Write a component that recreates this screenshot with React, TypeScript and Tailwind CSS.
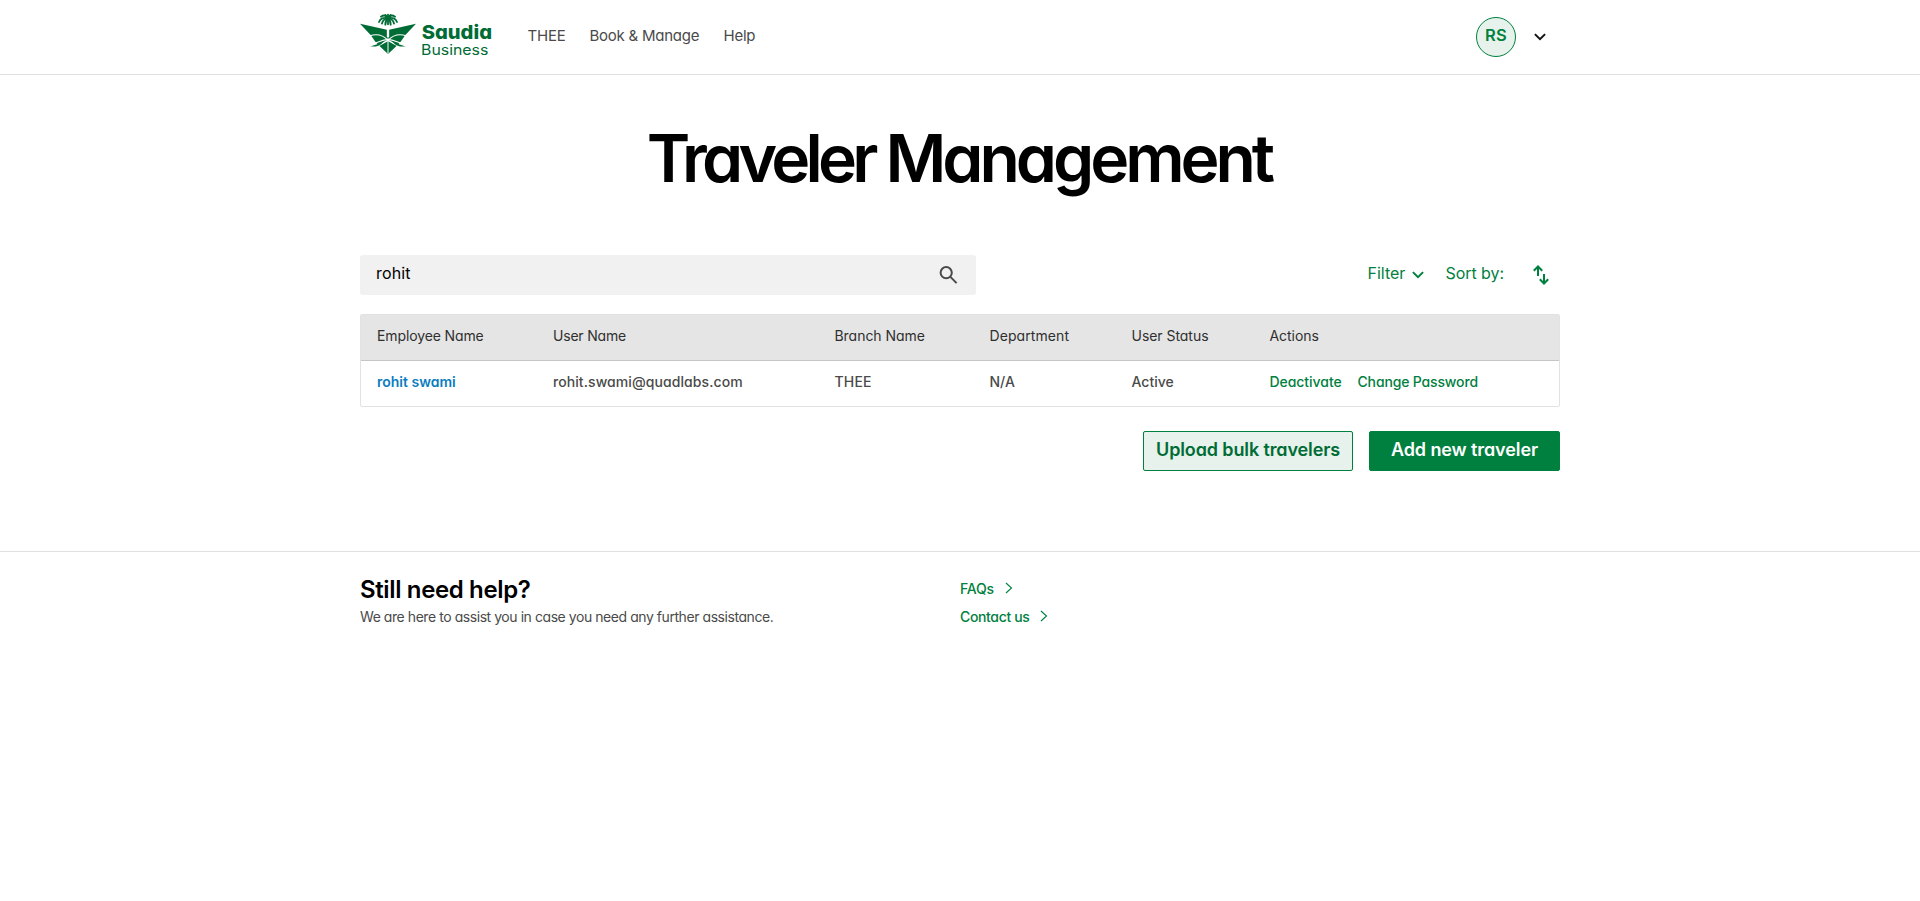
type Column = { label: string; width: string; tracking: string };

const columns: Column[] = [
  { label: "Employee Name", width: "w-[176px]", tracking: "tracking-[-0.12px]" },
  { label: "User Name", width: "w-[281.5px]", tracking: "tracking-[-0.2px]" },
  { label: "Branch Name", width: "w-[155px]", tracking: "tracking-[-0.04px]" },
  { label: "Department", width: "w-[142px]", tracking: "tracking-[0.08px]" },
  { label: "User Status", width: "w-[138px]", tracking: "tracking-[-0.04px]" },
  { label: "Actions", width: "flex-1", tracking: "tracking-[-0.05px]" },
];

function Logo() {
  return (
    <svg width="136" height="46" viewBox="0 0 408 138" fill="#006c35" className="shrink-0">
      <path d="M0 32 L84 51 L168 32 L136 66 L122 86 L112 97 L84 123 L56 97 L46 86 L32 66Z" />
      <g fill="none" stroke="#fff">
        <path d="M84 44 V122" strokeWidth="3" />
        <path d="M84 44 V72" strokeWidth="7" />
        <path d="M28 69 C48 62 68 65 84 82 C100 65 120 62 140 69" strokeWidth="3.5" />
        <path d="M40 92 C58 88 70 78 84 80 C98 78 110 88 128 92" strokeWidth="3.5" />
        <path d="M50 101 L84 82 L118 101" strokeWidth="4" />
      </g>
      <path d="M30 99 C44 99 54 92 72 84 C62 96 54 104 30 99Z" />
      <path d="M138 99 C124 99 114 92 96 84 C106 96 114 104 138 99Z" />
      <g fill="none" stroke="#006c35" strokeWidth="5.5" strokeLinecap="round">
        <path d="M84 16 C72 12 61 17 57 27" />
        <path d="M84 16 C75 16 67 23 66 32" />
        <path d="M84 16 C79 20 76 27 76 35" />
        <path d="M84 16 C96 12 107 17 111 27" />
        <path d="M84 16 C93 16 101 23 102 32" />
        <path d="M84 16 C89 20 92 27 92 35" />
        <path d="M84 14 C78 7 70 6 63 11" />
        <path d="M84 14 C90 7 98 6 105 11" />
        <path d="M84 5 V34" />
        <path d="M84 14 L76 6 M84 14 L92 6" />
      </g>
      <text x="185" y="78" fontSize="58" fontWeight="800" textLength="211" lengthAdjust="spacingAndGlyphs">
        Saudia
      </text>
      <text x="183" y="125" fontSize="44" fontWeight="400" textLength="202" lengthAdjust="spacingAndGlyphs">
        Business
      </text>
    </svg>
  );
}

function ChevronDown({ className }: { className: string }) {
  return (
    <svg viewBox="0 0 12 8" width="12" height="8" fill="none" stroke="currentColor" strokeWidth="2" className={className}>
      <path d="M0.9 1.1 L6 6.2 L11.1 1.1" />
    </svg>
  );
}

function ChevronRight() {
  return (
    <svg viewBox="0 0 8 12" width="8" height="12" fill="none" stroke="currentColor" strokeWidth="1.1">
      <path d="M1 1 L6.5 6 L1 11" />
    </svg>
  );
}

function Header() {
  return (
    <header className="h-[75px] border-b border-[#e0e0e0]">
      <div className="mx-auto flex h-full w-[1200px] items-start">
        <div className="pt-[13px]">
          <Logo />
        </div>
        <nav className="ml-[31.5px] flex h-[72px] items-center text-[15px] text-[#4a4a4a]">
          <a className="w-[62px] tracking-[-0.2px]">THEE</a>
          <a className="w-[134px] tracking-[-0.24px]">Book &amp; Manage</a>
          <a className="tracking-[-0.25px]">Help</a>
        </nav>
        <div className="ml-auto mr-[14px] flex pt-[17px]">
          <div className="flex h-10 w-10 items-center justify-center rounded-full border border-[#00803e] bg-[#e6f2eb] pb-[4px] text-[16.5px] font-semibold tracking-[0.2px] text-[#00803e]">
            RS
          </div>
          <ChevronDown className="ml-[18px] mt-4 text-[#111]" />
        </div>
      </div>
    </header>
  );
}

function Toolbar() {
  return (
    <div className="flex h-10 justify-between">
      <div className="flex w-[616px] items-start justify-between rounded-[3px] bg-[#f1f1f1] pl-4 pr-[18.5px] text-[16px] leading-[36px] text-black">
        <span className="tracking-[0.15px]">rohit</span>
        <svg width="19" height="19" viewBox="0 0 19 19" fill="none" stroke="#4a4a4a" strokeWidth="2" className="mt-[10px]">
          <circle cx="7.2" cy="7.7" r="5.6" />
          <path d="M11.4 11.9 L17.6 18.1" />
        </svg>
      </div>
      <div className="flex items-start text-[16px] leading-[36px] text-[#00803e]">
        <span className="w-[44.5px]">Filter</span>
        <ChevronDown className="mt-4" />
        <span className="ml-[21.5px] w-[87.5px] tracking-[-0.05px]">Sort by:</span>
        <svg width="16" height="20" viewBox="0 0 16 20" fill="none" stroke="currentColor" strokeWidth="2" className="mr-[11px] mt-[10px]">
          <path d="M5 11 V2 M0.8 5.7 L5 1.5 L9.2 5.7" />
          <path d="M11 9 V18 M6.8 14.3 L11 18.5 L15.2 14.3" />
        </svg>
      </div>
    </div>
  );
}

function TravelerTable() {
  return (
    <div className="mt-[19px] rounded-[2px] border border-[#e2e2e2] text-[14px]">
      <div className="flex h-[46px] border-b border-[#c6c6c6] bg-[#e5e5e5] pl-4 leading-[41px] text-[#2f2f2f]">
        {columns.map((c) => (
          <div key={c.label} className={`${c.width} ${c.tracking}`}>
            {c.label}
          </div>
        ))}
      </div>
      <div className="flex h-[45px] pl-4 font-medium leading-[41px] text-[#4a4a4a]">
        <div className="w-[176px] font-semibold text-[#0a7dc0]">rohit swami</div>
        <div className="w-[281.5px] tracking-[0.08px]">rohit.swami@quadlabs.com</div>
        <div className="w-[155px] tracking-[0.2px]">THEE</div>
        <div className="w-[142px]">N/A</div>
        <div className="w-[138px]">Active</div>
        <div className="flex flex-1 text-[#00803e]">
          <a className="w-[88px] tracking-[-0.05px]">Deactivate</a>
          <a className="tracking-[-0.15px]">Change Password</a>
        </div>
      </div>
    </div>
  );
}

function Footer() {
  return (
    <footer className="mt-20 border-t border-[#e0e0e0]">
      <div className="mx-auto flex w-[1200px] pt-[22px]">
        <div className="w-[600px]">
          <h2 className="h-[28px] text-[24px] font-semibold leading-[31px] tracking-[-0.36px] text-black">Still need help?</h2>
          <p className="text-[14px] leading-[29px] tracking-[-0.44px] text-[#4a4a4a]">
            We are here to assist you in case you need any further assistance.
          </p>
        </div>
        <div className="text-[14px] font-medium text-[#00803e]">
          <a className="flex h-[28px] items-center gap-[11px]">
            <span className="tracking-[-0.2px]">FAQs</span>
            <ChevronRight />
          </a>
          <a className="flex h-[28px] items-center gap-[11px]">
            <span className="tracking-[-0.35px]">Contact us</span>
            <ChevronRight />
          </a>
        </div>
      </div>
    </footer>
  );
}

export default function App() {
  return (
    <div className="min-h-[901px] bg-white font-['Inter',sans-serif] [font-feature-settings:'cv11']">
      <Header />
      <main className="mx-auto w-[1200px]">
        <h1 className="h-[180px] whitespace-nowrap pr-[2px] text-center text-[66px] font-semibold leading-[167px] text-black">
          <span className="tracking-[-4.75px]">Traveler </span>
          <span className="tracking-[-4.05px]">Management</span>
        </h1>
        <Toolbar />
        <TravelerTable />
        <div className="mt-6 flex justify-end gap-4 text-[18px] font-semibold leading-[36px]">
          <button className="flex h-10 w-[210px] items-start justify-center rounded-[2px] border border-[#00803e] bg-[#e6f2eb] tracking-[-0.12px] text-[#006c35]">
            Upload bulk travelers
          </button>
          <button className="flex h-10 w-[191px] items-start justify-center rounded-[2px] border border-[#00803e] bg-[#00803e] tracking-[-0.1px] text-white">
            Add new traveler
          </button>
        </div>
      </main>
      <Footer />
    </div>
  );
}
